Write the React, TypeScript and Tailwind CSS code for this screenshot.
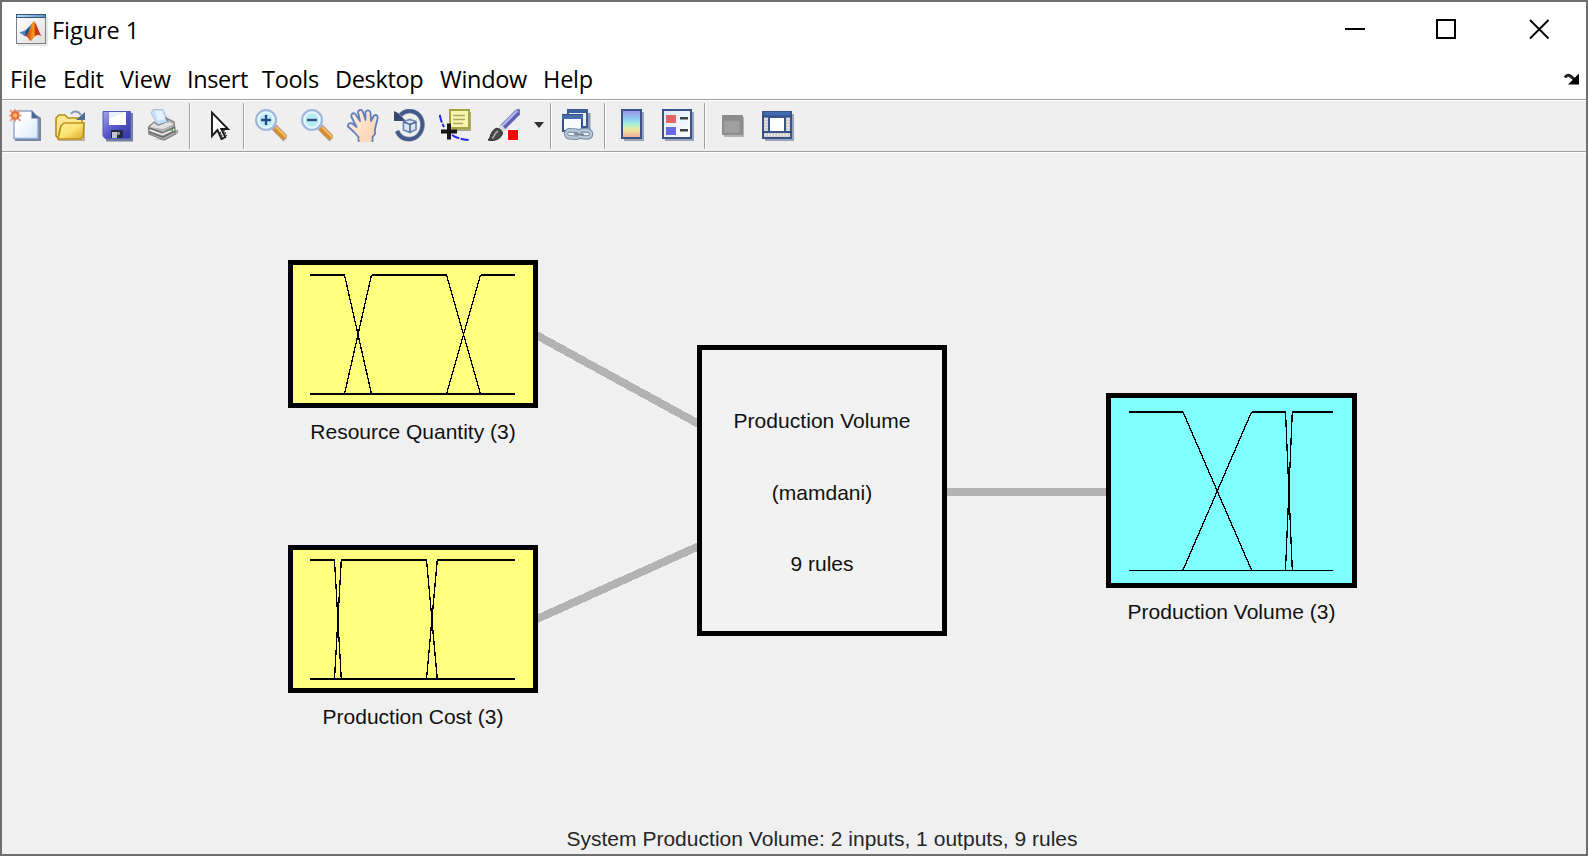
import React from "react";

type IconProps = { children: React.ReactNode; className?: string; w?: number };

function Icon({ children, w = 32, className = "" }: IconProps) {
  return (
    <svg width={w} height={33} viewBox={`0 0 ${w} 33`} className={`block shrink-0 ${className}`}>
      {children}
    </svg>
  );
}

function Separator({ className }: { className: string }) {
  return <div className={`h-[46px] w-0.5 shrink-0 border-l border-r border-l-[#a0a0a0] border-r-white ${className}`} />;
}

function MatlabLogo() {
  return (
    <svg width="32" height="32" viewBox="0 0 32 32" className="block shrink-0">
      <defs>
        <linearGradient id="bar" x1="0" x2="1">
          <stop offset="0" stopColor="#b9d9f5" />
          <stop offset="1" stopColor="#5b94c8" />
        </linearGradient>
        <linearGradient id="paper" x1="0" y1="0" x2="1" y2="1">
          <stop offset="0" stopColor="#ffffff" />
          <stop offset="1" stopColor="#dedede" />
        </linearGradient>
        <linearGradient id="flame" x1="0" x2="1">
          <stop offset="0" stopColor="#8d2a18" />
          <stop offset="0.4" stopColor="#f07a1c" />
          <stop offset="0.55" stopColor="#f9a01e" />
          <stop offset="0.65" stopColor="#c23a18" />
          <stop offset="1" stopColor="#d93a1e" />
        </linearGradient>
      </defs>
      <path d="M2 31H31V3" fill="none" stroke="#e0e0e0" strokeWidth="1.5" />
      <rect x="0.5" y="0.5" width="29" height="29" fill="url(#paper)" stroke="#7c8186" />
      <rect x="0" y="0" width="30" height="4" fill="#33587c" />
      <rect x="1" y="1" width="28" height="2" fill="url(#bar)" />
      <path d="M3.500 18.500L10 16C12.500 15 14 11 17 8.500L12.500 20L8.500 22Z" fill="#4a8abb" />
      <path d="M10 16L14 12L12.500 20L8.500 22Z" fill="#245080" />
      <path d="M8.500 22L12 19C14.500 15 15.500 9 17.800 7C20 8 22 16 25.500 22C22.500 20.500 20 20 17.500 24L15 27C13 27 12 21.500 8.500 22Z" fill="url(#flame)" />
    </svg>
  );
}

const NewIcon = () => (
  <Icon>
    <defs>
      <linearGradient id="page" x1="0" y1="0" x2="1" y2="1">
        <stop offset="0.3" stopColor="#ffffff" />
        <stop offset="1" stopColor="#d6e8fa" />
      </linearGradient>
    </defs>
    <path d="M6 32H32V9L28 6V28H6Z" fill="#76869f" />
    <path d="M5 2H23L29 9V29.5H5Z" fill="url(#page)" stroke="#8fa8d2" strokeWidth="1.4" />
    <path d="M22.5 1.5V9.5H30Z" fill="#4d6795" />
    <g stroke="#eea184" strokeWidth="2">
      <path d="M6 0V13M0 6.5H12.5M1 1L11.5 12M11.5 1L1 12" />
    </g>
    <circle cx="6.2" cy="6.4" r="4.3" fill="#e56c3e" />
    <circle cx="6.2" cy="6.4" r="2.1" fill="#ffc06b" />
  </Icon>
);

const OpenIcon = () => (
  <Icon>
    <defs>
      <linearGradient id="folder" x1="0" y1="0" x2="1" y2="1">
        <stop offset="0" stopColor="#fff3a2" />
        <stop offset="0.5" stopColor="#fce370" />
        <stop offset="1" stopColor="#dca52a" />
      </linearGradient>
    </defs>
    <path d="M3 31H29V13" fill="none" stroke="#b9b39e" strokeWidth="2" />
    <path d="M1 27V9L4 6H10L13 9H25L27 11V17H6L3 29Z" fill="#fae890" stroke="#b98c17" strokeWidth="1.6" />
    <path d="M6 17L9 14H29L28 28L26 30H3Z" fill="url(#folder)" stroke="#c3941b" strokeWidth="1.6" />
    <path d="M16 5C18 1.5 23 1.5 26 6" fill="none" stroke="#8b9caf" strokeWidth="2" />
    <path d="M30 3V11H21Z" fill="#536f8e" />
  </Icon>
);

const SaveIcon = () => (
  <Icon>
    <defs>
      <linearGradient id="disk" x1="0" y1="0" x2="1" y2="1">
        <stop offset="0" stopColor="#a5a5ee" />
        <stop offset="0.5" stopColor="#5558c8" />
        <stop offset="1" stopColor="#3034a2" />
      </linearGradient>
    </defs>
    <path d="M5 31H31V4" fill="none" stroke="#7180a0" strokeWidth="3" />
    <path d="M2 2.5H29.5V29.5H4L2 27Z" fill="url(#disk)" stroke="#5558b8" />
    <path d="M8 3H25V16H8Z" fill="#e7f0fb" />
    <path d="M8 10L25 3V16H8Z" fill="#fff" />
    <rect x="10" y="21" width="12" height="8" fill="#222840" />
    <rect x="11" y="23" width="5" height="6" fill="#c3c6d2" />
    <rect x="16" y="23" width="3" height="3" fill="#8b8d99" />
  </Icon>
);

const PrintIcon = () => (
  <Icon>
    <path d="M4 31H19L31 24V20L17 30Z" fill="#aaa" />
    <path d="M4 4L6 0.500H16L22 14L11 17Z" fill="#c4defb" stroke="#b4c1d2" strokeWidth="1" />
    <path d="M8 2H15L18 10L11 12Z" fill="#e4f2ff" />
    <path d="M1.500 18L7 13L11 16L21 13L19 9L27 13L28.500 25L17 31L2 25Z" fill="#b2b2b2" stroke="#858585" strokeWidth="1.3" />
    <path d="M3 18L7 14L11 17L21 13L27 15L16 20Z" fill="#e1e1e1" />
    <path d="M2 19L16 24L28 18M2 23L16 28L28 22" fill="none" stroke="#6b6b6b" strokeWidth="1.8" />
    <path d="M3 21L15 25.500L27 20.500" fill="none" stroke="#eeeeee" strokeWidth="1.4" />
    <rect x="23" y="20" width="3" height="2" fill="#66b45c" />
  </Icon>
);

const PointerIcon = () => (
  <Icon>
    <path d="M11 3.5V27L16.500 21L20.5 30L24.3 28L20.3 20H27Z" fill="#fff" stroke="#1a1a1a" strokeWidth="1.9" />
    <path d="M19 23L22.500 31M22.500 20.5L25.500 27" stroke="#333" strokeWidth="1.5" strokeDasharray="2 1" />
  </Icon>
);

function Magnifier({ plus }: { plus?: boolean }) {
  return (
    <Icon>
      <path d="M19 18L31 30" stroke="#aca5a1" strokeWidth="7" />
      <path d="M20 19L30 29" stroke="#d78c25" strokeWidth="5.5" />
      <path d="M21 18L31 28" stroke="#f7bd65" strokeWidth="2" />
      <circle cx="11" cy="11" r="10" fill="#bceaf3" stroke="#a3b6de" strokeWidth="2.2" />
      <circle cx="11" cy="11" r="7.7" fill="none" stroke="#e5f8fb" strokeWidth="1.8" />
      <path d={plus ? "M6 11H16M11 6V16" : "M6 11H16"} stroke="#274c83" strokeWidth="2.4" />
    </Icon>
  );
}

const HandIcon = () => (
  <Icon>
    <defs>
      <linearGradient id="skin" x1="0" y1="0" x2="1" y2="1">
        <stop offset="0" stopColor="#fff3e6" />
        <stop offset="1" stopColor="#f9cfaa" />
      </linearGradient>
    </defs>
    <path
      d="M11.5 32V28L7 23L1 17.5C.5 14 4 13.5 6 15L9.5 18L4.500 8C3.800 4 7 3 9 6L13 12L11 3C12 0 15 0 16 3L18.500 11V3C20 .5 23 1 23.500 4L24 12L27 6.500C30 5 31 7 30.500 10L28 20V25L25.500 28V32Z"
      fill="url(#skin)"
      stroke="#5f7fbe"
      strokeWidth="1.8"
      strokeLinejoin="round"
    />
    <path d="M12.5 29H24.5V33H12.5Z" fill="#fadabd" />
  </Icon>
);

const RotateIcon = () => (
  <Icon>
    <path d="M7.500 6C14 -.5 24 1.500 28 9C32 18 27.500 28 18.500 30C11 31 6.500 28 4 22" fill="none" stroke="#8290ae" strokeWidth="4.800" />
    <path d="M7.500 6C14 -.5 24 1.500 28 9C32 18 27.500 28 18.500 30C11 31 6.500 28 4 22" fill="none" stroke="#44598a" strokeWidth="3.400" />
    <path d="M1 2V12H13L10.500 9.500L5 4Z" fill="#34496f" />
    <path d="M10.5 12.5L17 10.5L23 12.5V20.5L17 23.5L10.5 21Z" fill="#dce5f3" stroke="#7087b1" strokeWidth="1.7" />
    <path d="M11 13L17 15.5L23 13M17 15.5V23" fill="none" stroke="#4a669a" strokeWidth="1.600" />
  </Icon>
);

const DataCursorIcon = () => (
  <Icon>
    <path d="M.8 6C1.5 11 3 14 5 18M13 26C17 29 22 30 30 31" fill="none" stroke="#2525ef" strokeWidth="2" strokeDasharray="8 1.500" />
    <path d="M13 21H31.5V3" fill="none" stroke="#acaa7d" strokeWidth="2" />
    <rect x="11" y="1" width="19" height="18" fill="#f7f6ae" stroke="#a6a342" strokeWidth="2" />
    <path d="M14 6.5H26M14 10.5H26M14 14.5H24" stroke="#aaa863" strokeWidth="1.4" />
    <path d="M2 22.5H18M10 14.500V30.500" stroke="#161616" strokeWidth="4" />
  </Icon>
);

const BrushIcon = () => (
  <Icon>
    <path d="M14 19L30 3" stroke="#5f61b4" strokeWidth="6.5" />
    <path d="M13 18L29 2" stroke="#b6b7ee" strokeWidth="2.4" />
    <path d="M28 0H32V6Z" fill="#7776c8" />
    <path d="M12 17L17 22" stroke="#d9d9e2" strokeWidth="3.5" />
    <path d="M0 31C3 29 2 23 7 20C10 18 14 21 14.5 24C14 29 7 33 0 31Z" fill="#4a4a4a" stroke="#2c2c2c" />
    <path d="M4 29C7 28 6 24 10 22" stroke="#aaa" strokeWidth="1.6" fill="none" />
    <rect x="19" y="20" width="12" height="12" fill="#fff" />
    <rect x="20" y="21" width="10" height="10" fill="#f50a0a" />
  </Icon>
);

const LinkIcon = () => (
  <Icon>
    <path d="M8 22H27V4" fill="none" stroke="#8a98ae" strokeWidth="3" />
    <rect x="6" y="1" width="19" height="17" fill="#e8eff8" stroke="#3c588d" strokeWidth="2" />
    <path d="M5 2H26" stroke="#3b5e9e" strokeWidth="4" />
    <path d="M1 6H20V22H1Z" fill="#f7faff" stroke="#344f83" strokeWidth="2" />
    <path d="M0 8H21" stroke="#4a6eac" strokeWidth="4" />
    <g fill="none" transform="rotate(4 18 26)">
      <rect x="4" y="22" width="14" height="7" rx="3.5" stroke="#7488a0" strokeWidth="4.4" />
      <rect x="17" y="21" width="12" height="7" rx="3.5" stroke="#7488a0" strokeWidth="4.4" />
      <rect x="4" y="22" width="14" height="7" rx="3.5" stroke="#b7c8d9" strokeWidth="2.4" />
      <rect x="17" y="21" width="12" height="7" rx="3.5" stroke="#b7c8d9" strokeWidth="2.4" />
      <path d="M12 25.500H22" stroke="#71869d" strokeWidth="2" />
    </g>
  </Icon>
);

const ColorbarIcon = () => (
  <Icon>
    <defs>
      <linearGradient id="spectrum" x1="0" y1="0" x2="0" y2="1">
        <stop offset="0" stopColor="#a18ee6" />
        <stop offset="0.3" stopColor="#8cc9f1" />
        <stop offset="0.48" stopColor="#a2efe0" />
        <stop offset="0.7" stopColor="#eceb9f" />
        <stop offset="1" stopColor="#f5a59b" />
      </linearGradient>
    </defs>
    <path d="M8 31H27V3" fill="none" stroke="#9aa4b6" strokeWidth="2" />
    <rect x="6" y="1" width="19" height="28" fill="url(#spectrum)" stroke="#3a5389" strokeWidth="2" />
  </Icon>
);

const LegendIcon = () => (
  <Icon>
    <defs>
      <linearGradient id="legend" x1="0" y1="0" x2="1" y2="1">
        <stop offset="0" stopColor="#dce8f5" />
        <stop offset="1" stopColor="#fff" />
      </linearGradient>
    </defs>
    <path d="M3 31H31V3" fill="none" stroke="#9aa4b6" strokeWidth="2" />
    <rect x="1" y="1" width="28" height="28" fill="url(#legend)" stroke="#3a5389" strokeWidth="2" />
    <rect x="4" y="6" width="10" height="8" fill="#e36464" />
    <rect x="4" y="18" width="10" height="8" fill="#6868e4" />
    <path d="M18 9.2H26M18 21.2H26" stroke="#3f4145" strokeWidth="2.4" />
  </Icon>
);

const HidePlotIcon = () => (
  <Icon>
    <rect x="8" y="8" width="20" height="20" rx="1" fill="#b2b2b2" />
    <rect x="6" y="6" width="21" height="20" rx="1" fill="#8c8c8c" />
    <rect x="8" y="12" width="16" height="12" fill="#a0a0a0" stroke="#939393" />
  </Icon>
);

const ShowPlotIcon = () => (
  <Icon>
    <path d="M3 31H31V5" fill="none" stroke="#9aa4b6" strokeWidth="2" />
    <rect x="1" y="3" width="28" height="26" fill="#c8c9c8" stroke="#3a5389" strokeWidth="2" />
    <rect x="2" y="3" width="26" height="4" fill="#436bb2" />
    <path d="M0 7.5H30M0 23H30" stroke="#2e4c87" strokeWidth="2" />
    <path d="M4 9V22M26 9V22M3 26H28" stroke="#eceae4" strokeWidth="3" strokeDasharray="1.5 1.5" />
    <rect x="7" y="8" width="16" height="15" fill="#fff" stroke="#3a5389" strokeWidth="2" />
  </Icon>
);

const menus = [
  { label: "File", box: "w-[53px] tracking-[-0.2px]" },
  { label: "Edit", box: "w-[57px] tracking-[-0.3px]" },
  { label: "View", box: "w-[67px] tracking-[-0.15px]" },
  { label: "Insert", box: "w-[75px] tracking-[-0.4px]" },
  { label: "Tools", box: "w-[73px] tracking-[-0.3px]" },
  { label: "Desktop", box: "w-[105px] tracking-[-0.35px]" },
  { label: "Window", box: "w-[103px] tracking-[-0.3px]" },
  { label: "Help", box: "w-[60px] tracking-[-0.2px]" },
];

type MembershipProps = {
  box: string;
  width: number;
  height: number;
  plateaus: string;
  slopes: string;
  base: string;
  baseWidth: number;
};

function Membership({ box, width, height, plateaus, slopes, base, baseWidth }: MembershipProps) {
  return (
    <div className={`absolute border-[5px] border-black ${box}`}>
      <svg width={width} height={height} shapeRendering="crispEdges" className="block" fill="none" stroke="#000">
        <path d={plateaus} strokeWidth="2" />
        <path d={slopes} strokeWidth="1.3" />
        <path d={base} strokeWidth={baseWidth} />
      </svg>
    </div>
  );
}

const label = "absolute flex justify-center whitespace-nowrap text-[21px] leading-6 text-[#111]";

export default function App() {
  return (
    <div className="flex h-[856px] w-[1588px] flex-col overflow-hidden border-2 border-[#6f6f6f] bg-[#f0f0f0] font-['Liberation_Sans',sans-serif]">
      <header className="flex h-[55px] shrink-0 items-start bg-white pl-3.5">
        <div className="pt-3">
          <MatlabLogo />
        </div>
        <div className="pl-[4px] pt-3 font-['Open_Sans',sans-serif] text-[23.5px] leading-8 tracking-[-0.05px] text-black">Figure 1</div>
        <svg width="206" height="24" viewBox="0 0 206 24" className="ml-auto mr-[35px] mt-[15px] block" fill="none" stroke="#000">
          <path d="M0 12H20" strokeWidth="2" />
          <rect x="92" y="3" width="18" height="18" strokeWidth="2" />
          <path d="M185 3L203.500 21.500M203.500 3L185 21.500" strokeWidth="1.800" />
        </svg>
      </header>
      <nav className="flex h-[42px] shrink-0 items-start bg-white pl-2 font-['Open_Sans',sans-serif] text-[23.5px] leading-8 text-black">
        {menus.map((m) => (
          <div key={m.label} className={`shrink-0 pt-1.5 ${m.box}`}>
            {m.label}
          </div>
        ))}
        <svg width="16" height="12" viewBox="0 0 16 12" className="ml-auto mr-[6px] mt-4 block">
          <path d="M1 4.500C3 1 5 1 11 7" fill="none" stroke="#222" strokeWidth="3" />
          <path d="M15 0.500V11.500H4Z" fill="#000" />
        </svg>
      </nav>
      <div className="flex h-[54px] shrink-0 items-start border-b border-t border-b-white border-t-[#a0a0a0] bg-[#efefef]">
        <div className="flex h-[52px] w-full items-start border-b border-t border-b-[#a0a0a0] border-t-white">
          <div className="flex gap-3.5 pl-[7px] pt-2">
            <NewIcon />
            <OpenIcon />
            <SaveIcon />
            <PrintIcon />
          </div>
          <Separator className="ml-[10px] mt-0.5" />
          <div className="pl-[10px] pt-2">
            <PointerIcon />
          </div>
          <Separator className="ml-[10px] mt-0.5" />
          <div className="flex gap-3.5 pl-[10px] pt-2">
            <Magnifier plus />
            <Magnifier />
            <HandIcon />
            <RotateIcon />
            <DataCursorIcon />
          </div>
          <div className="pl-[17px] pt-2">
            <BrushIcon />
          </div>
          <svg width="10" height="6" viewBox="0 0 10 6" className="ml-3.5 mt-[21px] block">
            <path d="M0 0H10L5 6Z" fill="#333" />
          </svg>
          <Separator className="ml-[6px] mt-0.5" />
          <div className="pl-[10px] pt-2">
            <LinkIcon />
          </div>
          <Separator className="ml-[10px] mt-0.5" />
          <div className="flex gap-3.5 pl-[10px] pt-2">
            <ColorbarIcon />
            <LegendIcon />
          </div>
          <Separator className="ml-[10px] mt-0.5" />
          <div className="flex gap-3.5 pl-[10px] pt-2">
            <HidePlotIcon />
            <ShowPlotIcon />
          </div>
        </div>
      </div>
      <main className="relative flex flex-1 items-end justify-center">
        <svg width="1584" height="701" viewBox="2 153 1584 701" className="absolute left-0 top-0" shapeRendering="crispEdges" stroke="#b3b3b3" strokeWidth="8">
          <path d="M530 331.600L705 427.400M530 622.100L705 543.400M940 492H1110" />
        </svg>
        <Membership
          box="left-[286px] top-[107px] h-[148px] w-[250px] bg-[#ffff80]"
          width={240}
          height={138}
          plateaus="M17 10H51.5M78.5 10H154M187.5 10H222"
          slopes="M51.5 10L78.5 129M51.5 129L78.5 10M153.5 10L187.5 129M153.5 129L187.5 10"
          base="M17 129H222"
          baseWidth={2}
        />
        <div className={`${label} left-[286px] top-[267px] w-[250px]`}>Resource Quantity (3)</div>
        <Membership
          box="left-[286px] top-[392px] h-[148px] w-[250px] bg-[#ffff80]"
          width={240}
          height={138}
          plateaus="M17 10H42M48 10H134M144 10H222"
          slopes="M41.5 10L48.3 129M41.5 129L48.3 10M133.5 10L144.3 129M133.5 129L144.3 10"
          base="M17 129H222"
          baseWidth={2}
        />
        <div className={`${label} left-[286px] top-[552px] w-[250px]`}>Production Cost (3)</div>
        <div className="absolute left-[695px] top-[192px] flex h-[291px] w-[250px] flex-col items-center gap-12 border-[5px] border-black bg-[#f2f2f2] pt-[59px] text-[21px] leading-6 text-[#111]">
          <div className="tracking-[0.05px]">Production Volume</div>
          <div>(mamdani)</div>
          <div className="-mt-px">9 rules</div>
        </div>
        <Membership
          box="left-[1104px] top-[240px] h-[195px] w-[251px] bg-[#80ffff]"
          width={241}
          height={185}
          plateaus="M18 14H72M141 14H175M181 14H222"
          slopes="M72 14L140.5 172M72 172L140.5 14M174.5 14L181.3 172M174.5 172L181.3 14"
          base="M18 172.5H222"
          baseWidth={1}
        />
        <div className={`${label} left-[1104px] top-[447px] w-[251px]`}>Production Volume (3)</div>
        <div className="relative left-7 whitespace-nowrap pb-[3px] text-[21px] leading-6 tracking-[0.02px] text-[#262626]">
          System Production Volume: 2 inputs, 1 outputs, 9 rules
        </div>
      </main>
    </div>
  );
}
